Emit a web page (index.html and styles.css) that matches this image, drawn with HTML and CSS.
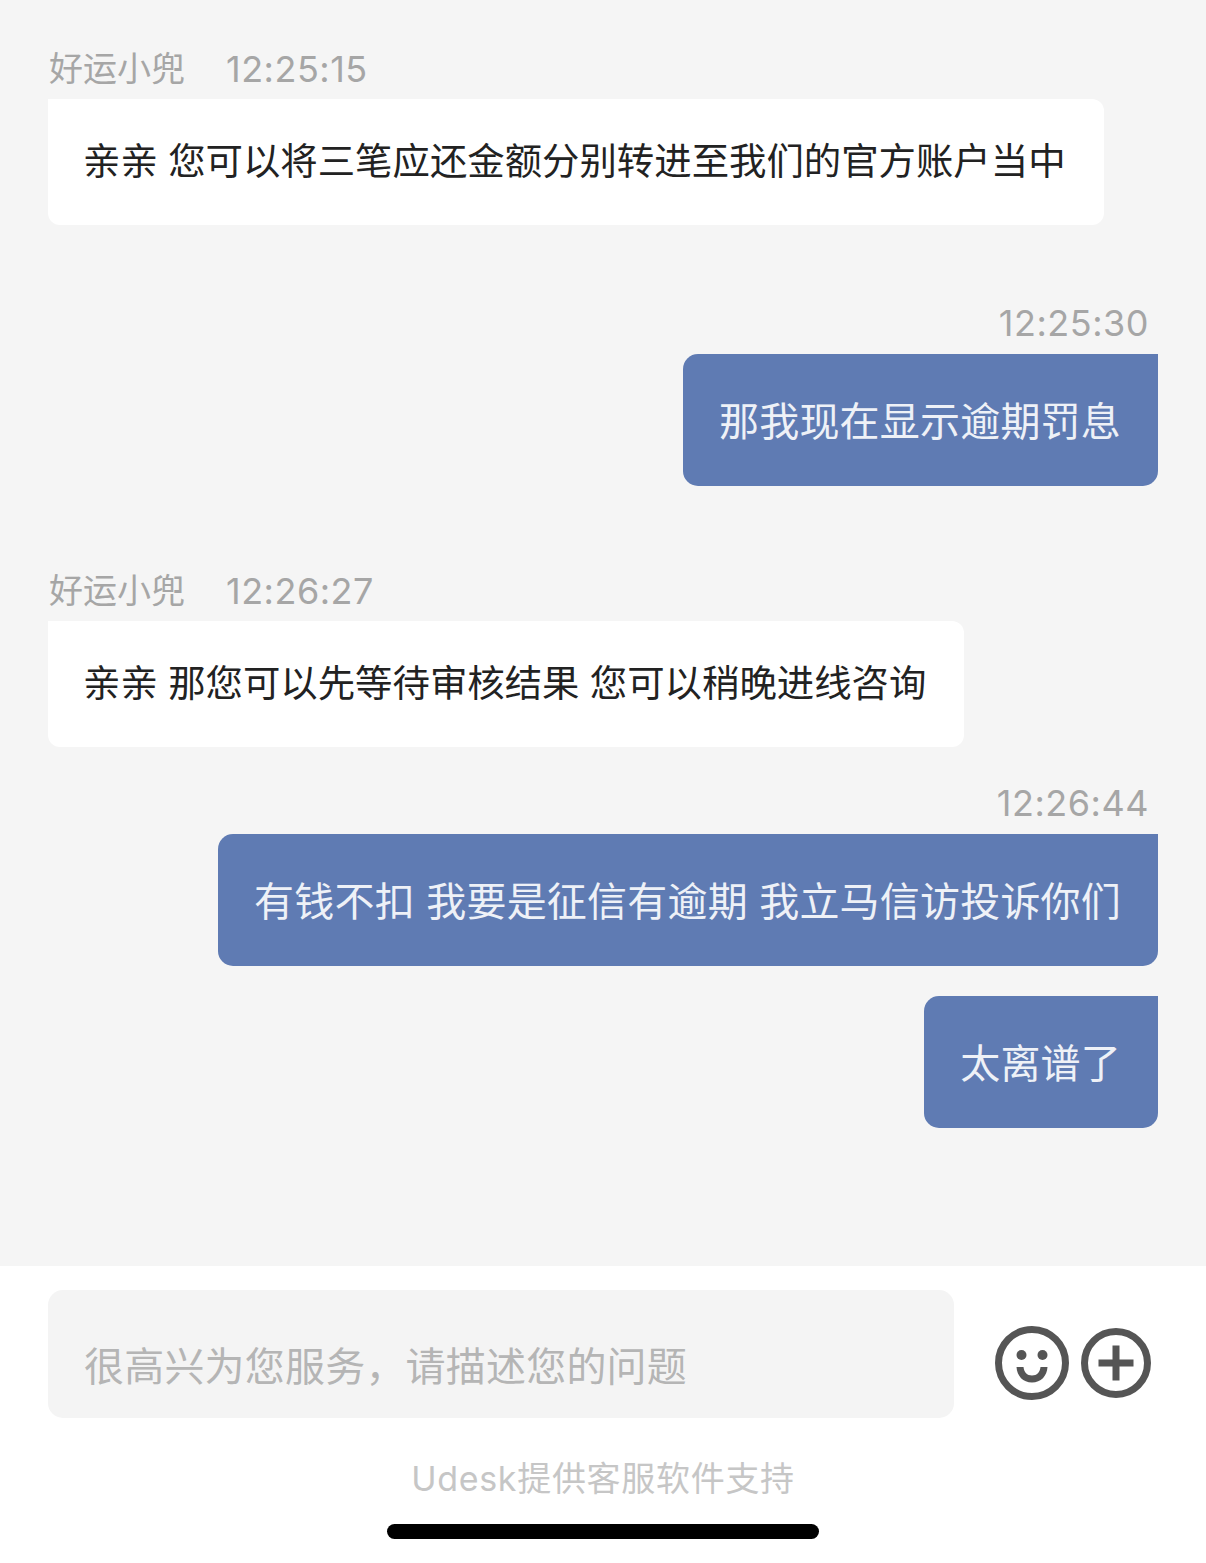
FILE: index.html
```html
<!DOCTYPE html>
<html lang="en">
<head>
  <meta charset="UTF-8">
  <title>Udesk Chat</title>
  <link rel="stylesheet" href="styles.css">
</head>
<body>

<div class="page">

  <div class="chat">

    <div class="msg agent first">
      <div class="meta"><span class="name">好运小兜</span><span class="time">12:25:15</span></div>
      <div class="bubble">亲亲 您可以将三笔应还金额分别转进至我们的官方账户当中</div>
    </div>

    <div class="msg user gap-a">
      <div class="meta"><span class="time">12:25:30</span></div>
      <div class="bubble">那我现在显示逾期罚息</div>
    </div>

    <div class="msg agent gap-b">
      <div class="meta"><span class="name">好运小兜</span><span class="time">12:26:27</span></div>
      <div class="bubble">亲亲 那您可以先等待审核结果 您可以稍晚进线咨询</div>
    </div>

    <div class="msg user gap-c">
      <div class="meta"><span class="time">12:26:44</span></div>
      <div class="bubble">有钱不扣 我要是征信有逾期 我立马信访投诉你们</div>
    </div>

    <div class="msg user gap-d">
      <div class="bubble">太离谱了</div>
    </div>

  </div>

  <div class="footer">
    <div class="input-row">
      <div class="input-box">很高兴为您服务，请描述您的问题</div>
      <div class="icons">
        <svg class="icon-smile" width="74" height="74" viewBox="0 0 74 74">
          <circle cx="37" cy="37" r="33.500" fill="none" stroke="#555" stroke-width="7"/>
          <circle cx="26.500" cy="29" r="5" fill="#555"/>
          <circle cx="47.500" cy="29" r="5" fill="#555"/>
          <path d="M21.500 41h7c.5 5 3.500 8.500 8.500 8.500s8-3.500 8.500-8.500h7c-.5 9-6.500 15.500-15.500 15.500s-15-6.500-15.500-15.500z" fill="#555"/>
        </svg>
        <svg class="icon-plus" width="70" height="70" viewBox="0 0 70 70">
          <circle cx="35" cy="35" r="31.500" fill="none" stroke="#555" stroke-width="7"/>
          <rect x="17.500" y="31.500" width="35" height="7" fill="#555"/>
          <rect x="31.500" y="17.500" width="7" height="35" fill="#555"/>
        </svg>
      </div>
    </div>
    <div class="powered">Udesk提供客服软件支持</div>
    <div class="home-bar"></div>
  </div>

</div>

</body>
</html>
```

FILE: styles.css
```css
* {
  box-sizing: border-box;
}
body {
  margin: 0;
  padding: 0;
  font-family: "Noto Sans CJK SC", sans-serif;
  background-color: #fff;
}
.page {
  display: flex;
  flex-direction: column;
  width: 1206px;
  height: 1563px;
  overflow: hidden;
}
.chat {
  height: 1266px;
  padding: 0 48px;
  background-color: #f5f5f5;
}
.msg {
  display: flex;
  flex-direction: column;
}
.msg.agent {
  align-items: flex-start;
}
.msg.user {
  align-items: flex-end;
}
.first {
  margin-top: 45px;
}
.gap-a {
  margin-top: 74px;
}
.gap-b {
  margin-top: 81px;
}
.gap-c {
  margin-top: 32px;
}
.gap-d {
  margin-top: 30px;
}
.meta {
  display: flex;
  align-items: center;
  height: 48px;
  color: #a6a6a6;
}
.agent .meta {
  margin-bottom: 6px;
  padding-left: 1px;
}
.user .meta {
  margin-bottom: 7px;
  padding-right: 9px;
}
.name {
  margin-right: 41px;
  padding-bottom: 5px;
  font-size: 34px;
}
.time {
  font-family: Inter, sans-serif;
  font-size: 36px;
  letter-spacing: 0.5px;
}
.bubble {
  white-space: nowrap;
}
.agent .bubble {
  height: 126px;
  padding: 0 38px 0 35px;
  line-height: 120px;
  font-size: 37.4px;
  word-spacing: 2px;
  color: #222;
  background-color: #fff;
  border-radius: 0 12px 12px 12px;
}
.user .bubble {
  height: 132px;
  padding: 0 37px 0 36px;
  line-height: 130px;
  font-size: 40px;
  letter-spacing: 0.2px;
  word-spacing: 2.2px;
  color: #eef1f7;
  background-color: #5f7bb3;
  border-radius: 15px 0 15px 15px;
}
.footer {
  display: flex;
  flex-direction: column;
  align-items: center;
  flex: 1;
  background-color: #fff;
}
.input-row {
  display: flex;
  align-items: center;
  width: 100%;
  padding: 24px 0 0 48px;
}
.input-box {
  width: 906px;
  height: 128px;
  padding-left: 36px;
  line-height: 149px;
  font-size: 40px;
  letter-spacing: 0.2px;
  color: #b5b5b5;
  background-color: #f4f4f4;
  border-radius: 15px;
}
.icons {
  display: flex;
  align-items: center;
  gap: 12px;
  margin-left: 41px;
  padding-top: 18px;
}
.powered {
  margin-top: 37px;
  height: 48px;
  line-height: 48px;
  font-family: Inter, "Noto Sans CJK SC", sans-serif;
  font-size: 34px;
  letter-spacing: 0.7px;
  color: #c6c6c6;
}
.home-bar {
  width: 432px;
  height: 15px;
  margin-top: 21px;
  background-color: #000;
  border-radius: 8px;
}
```
